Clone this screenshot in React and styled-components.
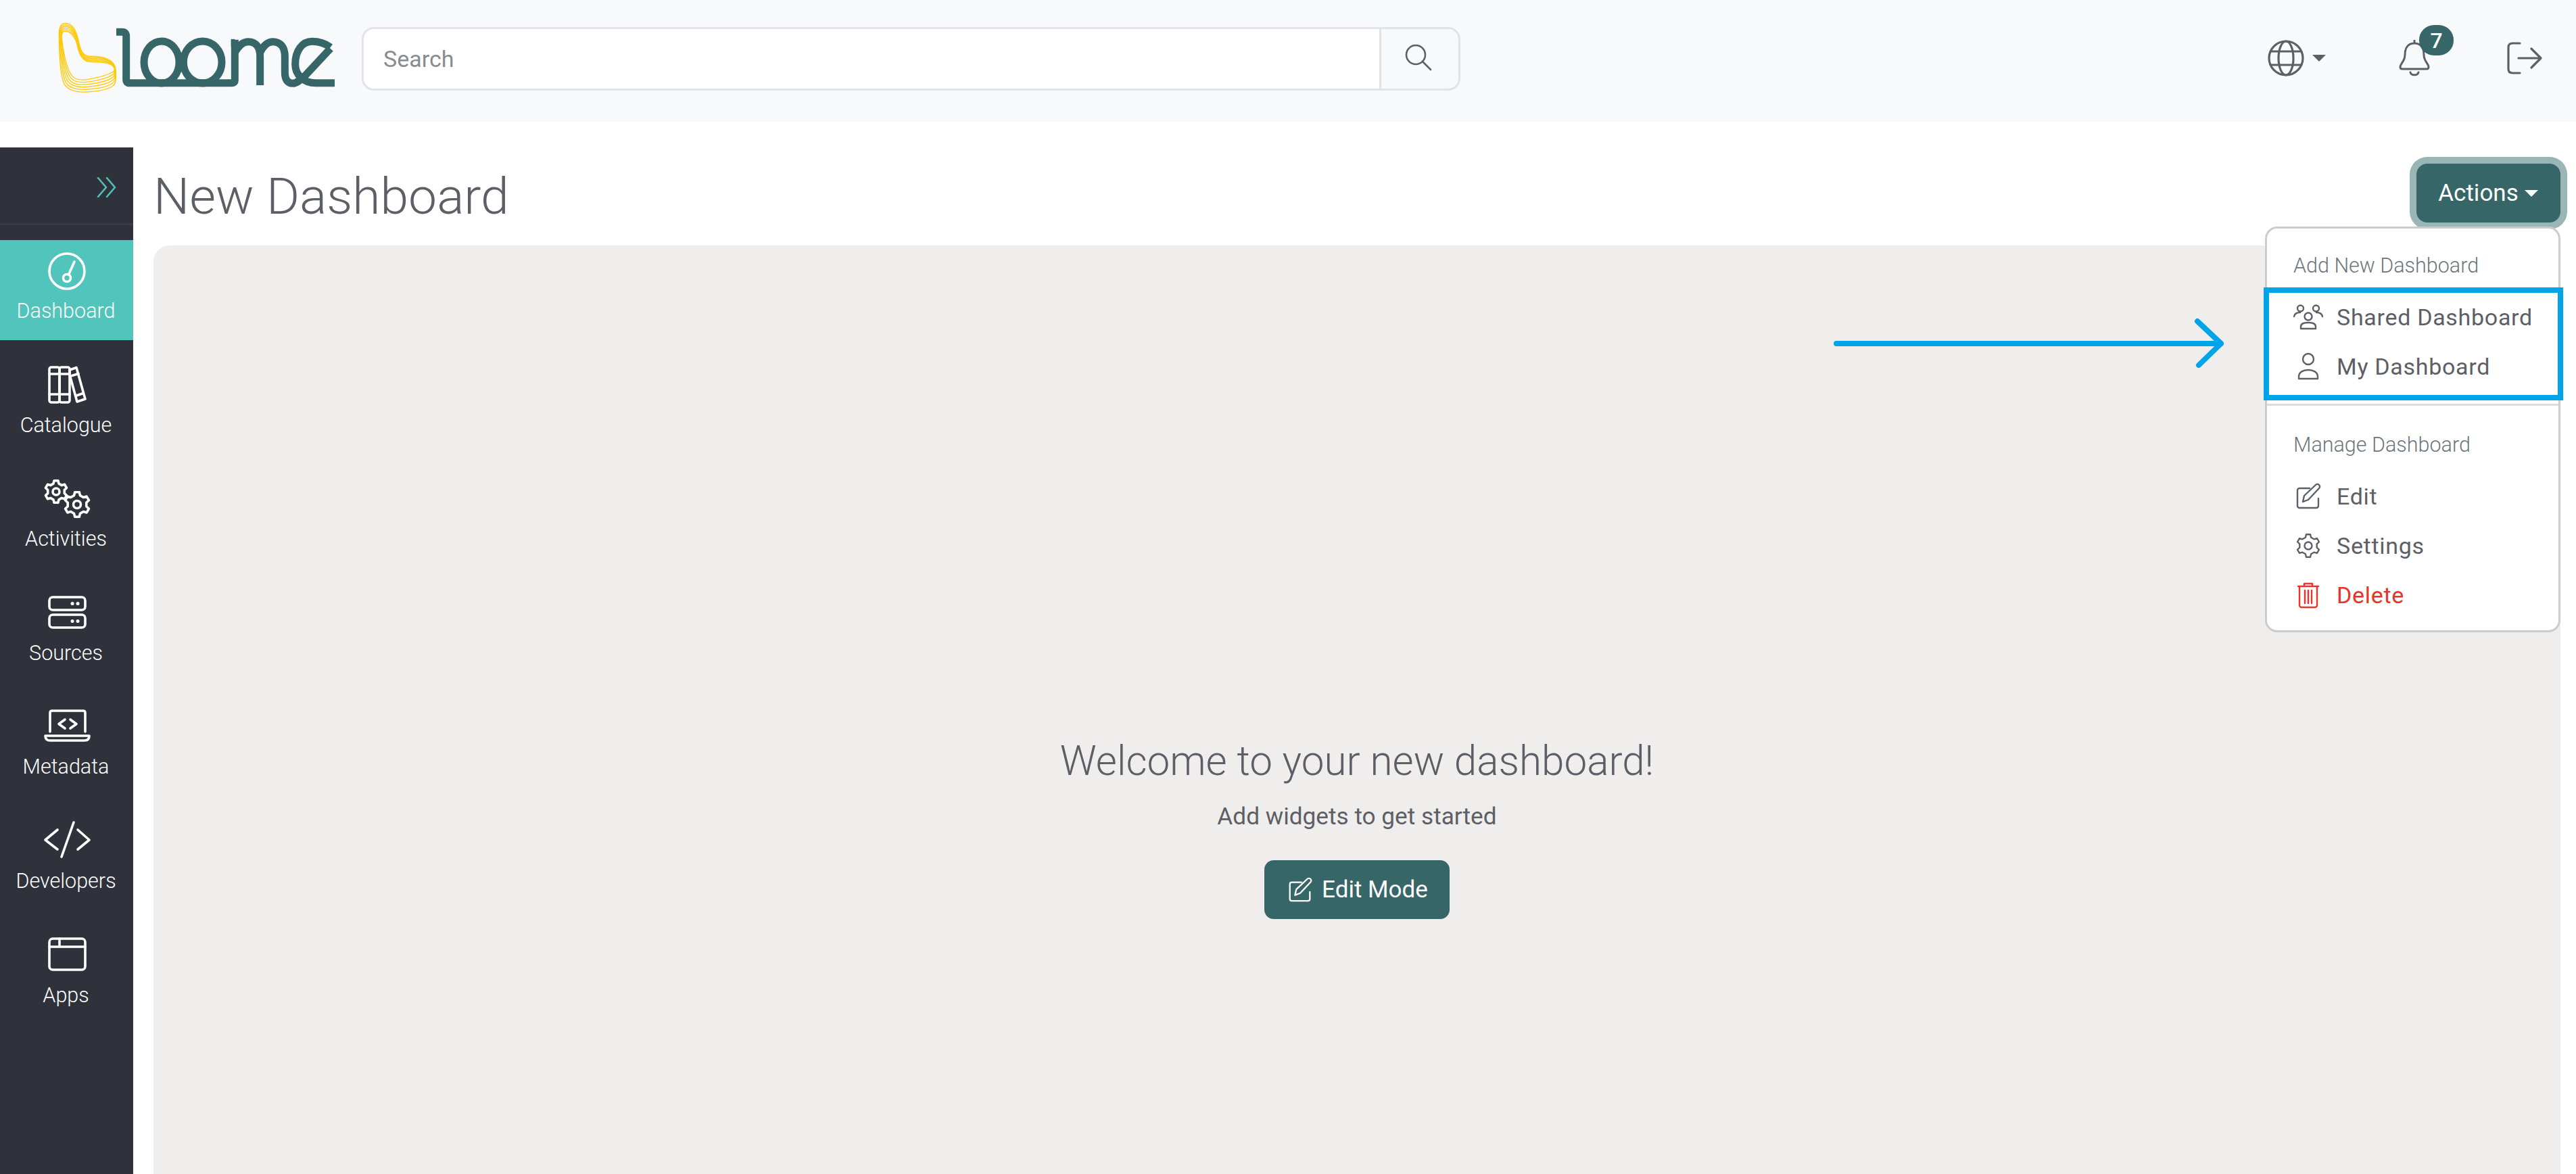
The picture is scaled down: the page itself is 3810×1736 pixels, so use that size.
import React from "react";
import styled, { createGlobalStyle } from "styled-components";

const Global = createGlobalStyle`
  html, body { margin: 0; padding: 0; background: #fff; }
  body { width: 3810px; height: 1736px; overflow: hidden; font-family: Roboto, "Liberation Sans", sans-serif; color: #5e5f66; }
  * { box-sizing: border-box; }
`;

const Page = styled.div`display: flex; flex-direction: column; width: 3810px; height: 1736px; overflow: hidden;`;
const Header = styled.header`flex: 0 0 180px; display: flex; align-items: center; background: #f8f9fb; padding: 0 50px 0 60px;`;
const LogoBox = styled.svg`width: 460px; height: 130px; flex: none; margin-top: -10px;`;
const SearchBar = styled.div`
  width: 1625px; height: 94px; margin: -7px 0 0 15px; display: flex; border: 3px solid #e0e3e9; border-radius: 18px; overflow: hidden;
`;
const SearchInput = styled.div`flex: 1; background: #fff; padding-left: 29px; display: flex; align-items: center; font-size: 34px; color: #888c92; border-right: 3px solid #e0e3e9;`;
const SearchBtn = styled.div`width: 114px; display: flex; align-items: center; justify-content: center;`;
const HeaderRight = styled.div`margin-left: auto; display: flex; align-items: center; margin-top: -8px;`;
const Caret = styled.span`
  width: 0; height: 0; border-left: 10px solid transparent; border-right: 10px solid transparent; border-top: 10px solid ${p => p.$color};
  margin-left: ${p => p.$gap}px;
`;
const BellWrap = styled.div`position: relative; width: 46px; height: 54px; margin: 0 114px 0 108px;`;
const Badge = styled.span`
  position: absolute; left: 30px; top: -22px; width: 51px; height: 45px; border-radius: 22px; background: #366668; color: #fff;
  font-size: 32px; font-weight: 500; display: flex; align-items: center; justify-content: center;
`;

const Body = styled.div`flex: 1; display: flex; padding-top: 38px; min-height: 0;`;
const Sidebar = styled.nav`flex: 0 0 197px; background: #2f323b; display: flex; flex-direction: column;`;
const Toggle = styled.div`flex: 0 0 115px; border-bottom: 3px solid #393c46; margin-bottom: 22px; display: flex; justify-content: flex-end; align-items: flex-start; padding: 44px 24px 0 0;`;
const NavItem = styled.div`
  flex: 0 0 148px; margin-bottom: 20.6px; background: ${p => (p.$active ? "#51c4bb" : "transparent")};
  display: flex; flex-direction: column; align-items: center; padding: 16px 2px 0 0; color: #fff; font-size: 30.5px; font-weight: 300; line-height: 38px;
`;
const NavIcon = styled.svg`width: 60px; height: 60px; overflow: visible; margin-bottom: 10px; fill: none; stroke: #fff; stroke-width: 3.6; stroke-linecap: round; stroke-linejoin: round;`;

const Main = styled.main`flex: 1; margin: 0 23px 0 30px; position: relative; display: flex; flex-direction: column; min-width: 0;`;
const TitleRow = styled.div`flex: 0 0 145px; display: flex; justify-content: space-between; align-items: flex-start;`;
const Title = styled.h1`margin: 22px 0 0 0; font-size: 75px; font-weight: 300; line-height: 100px; color: #5e5f66;`;
const ActionsBtn = styled.div`
  margin-top: 24px; width: 213px; height: 87px; border-radius: 16px; background: #366668; color: #fff; box-shadow: 0 0 0 10px #9ab5b5;
  display: flex; align-items: center; justify-content: center; font-size: 35px; padding-right: 1px;
`;
const Panel = styled.section`flex: 1; background: #efeeec; border-radius: 24px 24px 0 0; padding-top: 727px; display: flex; flex-direction: column; align-items: center;`;
const Welcome = styled.h2`margin: 0; font-size: 60.2px; font-weight: 300; line-height: 72px; color: #5e5f66;`;
const Sub = styled.p`margin: 23px 0 0; font-size: 35.2px; line-height: 44px; color: #5e5f66;`;
const EditBtn = styled.div`
  margin-top: 43px; width: 274px; height: 87px; border-radius: 14px; background: #366668; color: #fff; display: flex; align-items: center; justify-content: center; gap: 11px; font-size: 35px;
`;

const Menu = styled.div`position: absolute; top: 117px; right: 0; width: 437px; height: 600px; background: #fff; border: 3px solid #ccc; border-radius: 18px; padding-top: 24px;`;
const MenuHead = styled.div`height: 60px; margin-bottom: 10px; padding-left: 39px; display: flex; align-items: center; font-size: 30.5px; font-weight: 300; color: #6c757d;`;
const MenuItem = styled.div`height: 73px; padding-left: 39px; display: flex; align-items: center; gap: 20px; font-size: 34px; letter-spacing: 0.7px; color: ${p => p.$color || "#5e5f66"};`;
const MenuIcon = styled.svg`width: ${p => p.$size || 44}px; height: ${p => p.$size || 44}px; flex: none; fill: none; stroke: currentColor; stroke-width: 2.4; stroke-linecap: round; stroke-linejoin: round;`;
const Divider = styled.div`height: 3px; background: #ddd; margin: 19px 0 27px;`;
const Highlight = styled.div`position: absolute; top: 87px; right: -7px; width: 443px; height: 167px; border: 8px solid #00a4e8;`;
const ArrowSvg = styled.svg`position: absolute; left: 2480px; top: 250px; width: 590px; height: 80px; fill: none; stroke: #00a4e8; stroke-width: 8; stroke-linecap: round; stroke-linejoin: round;`;

function gearPath(cx, cy, R, n = 6) {
  const r = R * 0.76;
  const pts = [];
  for (let i = 0; i < n; i++) {
    const a = (i * 2 * Math.PI) / n;
    const s = Math.PI / n;
    [[r, -s * 0.62], [R, -s * 0.34], [R, s * 0.34], [r, s * 0.62]].forEach(([rad, d]) => {
      pts.push([cx + rad * Math.sin(a + d), cy - rad * Math.cos(a + d)]);
    });
  }
  return "M" + pts.map(p => p[0].toFixed(2) + " " + p[1].toFixed(2)).join("L") + "Z";
}

const outer = [[110,43],[85,43,82,70,82,90],[82,170,88,260,100,300],[110,340,160,350,200,348],[260,345,325,335,332,305],[335,280,335,250,330,235],[320,205,280,188,220,190],[190,190,178,165,170,130],[160,80,145,43,110,43]];
const inner = [[110,78],[96,78,92,95,94,110],[100,170,115,240,135,270],[150,295,180,297,210,292],[250,285,300,272,322,258],[328,253,330,247,326,240],[318,222,280,215,225,215],[195,215,175,195,165,150],[158,110,135,78,110,78]];
function lerpLoop(t) {
  const seg = outer.map((o, i) => o.map((v, j) => (v + (inner[i][j] - v) * t).toFixed(1)));
  return "M" + seg[0].join(" ") + seg.slice(1).map(s => "C" + s.join(" ")).join("") + "Z";
}

const Logo = () => (
  <LogoBox viewBox="0 0 1380 390">
    <g fill="none" stroke="#ffc90a" strokeWidth="4">
      {[0, 0.2, 0.4, 0.6, 0.8, 1].map(t => <path key={t} d={lerpLoop(t)} />)}
    </g>
    <g fill="none" stroke="#366668" strokeWidth="33" strokeLinejoin="round">
      <path d="M336 82H362Q380 82 380 100V295Q380 308 393 308H850Q862 308 862 296V116" />
      <path d="M845 130H862" />
      <ellipse cx="537" cy="216" rx="78" ry="93" />
      <ellipse cx="719" cy="216" rx="85" ry="93" />
      <path d="M862 172C880 140 900 125 922 125C955 125 974 150 974 190V318" />
      <path d="M974 172C990 140 1010 125 1030 125C1065 125 1084 150 1084 190V262C1084 295 1098 310 1118 310C1138 310 1155 292 1172 275" />
      <path d="M1286 150C1262 132 1235 124 1205 124C1160 124 1130 165 1130 225C1130 275 1170 308 1220 308H1305" />
      <path d="M1286 155L1170 280" />
    </g>
  </LogoBox>
);

const GlobeIcon = () => (
  <svg width="54" height="54" viewBox="0 0 54 54" fill="none" stroke="#5e5f66" strokeWidth="3.2">
    <circle cx="27" cy="27" r="25" />
    <ellipse cx="27" cy="27" rx="11" ry="25" />
    <path d="M5 17H49M5 37H49" />
  </svg>
);
const BellIcon = () => (
  <svg width="46" height="54" viewBox="0 0 46 54" fill="none" stroke="#5e5f66" strokeWidth="3" strokeLinecap="round" strokeLinejoin="round">
    <path d="M23 1V5M23 5C12 5 9 14 9 22C9 32 2 35 2 40C2 42 3 43 5 43H41C43 43 44 42 44 40C44 35 37 32 37 22C37 14 34 5 23 5Z" />
    <path d="M17 48C18 53 28 53 29 48" />
  </svg>
);
const LogoutIcon = () => (
  <svg width="52" height="48" viewBox="0 0 52 48" fill="none" stroke="#5e5f66" strokeWidth="3.2" strokeLinecap="round" strokeLinejoin="round">
    <path d="M19 2H8C4 2 2 4 2 8V40C2 44 4 46 8 46H19" />
    <path d="M17 24H50M36 10L50 24L36 38" />
  </svg>
);
const SearchIcon = () => (
  <svg width="44" height="44" viewBox="0 0 44 44" fill="none" stroke="#5e5f66" strokeWidth="2.6" strokeLinecap="round">
    <circle cx="16" cy="16" r="14" />
    <path d="M26 26L38 38" />
  </svg>
);

const navItems = [
  { label: "Dashboard", active: true, icon: <><circle cx="31" cy="30" r="26" /><circle cx="31" cy="40" r="5.5" /><path d="M34 34L42 16" /></> },
  { label: "Catalogue", icon: <><rect x="5" y="3" width="15" height="52" rx="3" /><rect x="20" y="3" width="15" height="52" rx="3" /><path d="M5 13H35M5 43H35" /><path d="M35 7L45 3.5L58 50L46 54L35 14Z" /><path d="M37 16L48 12.5M45 45L55 41.5" /></> },
  { label: "Activities", icon: <><path d={gearPath(15, 19, 16.5)} /><circle cx="15" cy="19" r="5" /><path d={gearPath(46, 38, 18.5)} /><circle cx="46" cy="38" r="5.5" /></> },
  { label: "Sources", icon: <><rect x="5" y="6" width="53" height="19" rx="5" /><rect x="5" y="32" width="53" height="19" rx="5" /><path d="M39 15.5H39.1M47 15.5H47.1M39 41.5H39.1M47 41.5H47.1" strokeWidth="5" /></> },
  { label: "Metadata", icon: <><path d="M6 37V9Q6 6 9 6H55Q58 6 58 9V37" /><path d="M-1 43H64Q64 50 57 50H6Q-1 50 -1 43Z" /><path d="M28 19L19 25.5L28 32M36 19L45 25.5L36 32" /></> },
  { label: "Developers", icon: <><path d="M17 13L-1 28L17 42M47 13L64 28L47 42M41 2L23 53" /></> },
  { label: "Apps", icon: <><rect x="5" y="5" width="53" height="46" rx="5" /><path d="M5 17H58M20 5V17" /></> },
];

const EditGlyph = () => <><path d="M37 25V36A3 3 0 0 1 34 39H9A3 3 0 0 1 6 36V13A3 3 0 0 1 9 10H24" /><path d="M14 30L16 21L33 5A3.5 3.5 0 0 1 38 10L22 27Z" /></>;

export default function App() {
  return (
    <Page>
      <Global />
      <Header>
        <Logo />
        <SearchBar>
          <SearchInput>Search</SearchInput>
          <SearchBtn><SearchIcon /></SearchBtn>
        </SearchBar>
        <HeaderRight>
          <GlobeIcon />
          <Caret $color="#5e5f66" $gap={12} />
          <BellWrap>
            <BellIcon />
            <Badge>7</Badge>
          </BellWrap>
          <LogoutIcon />
        </HeaderRight>
      </Header>
      <Body>
        <Sidebar>
          <Toggle>
            <svg width="30" height="30" viewBox="0 0 30 30" fill="none" stroke="#4fc3bb" strokeWidth="2.6" strokeLinecap="round" strokeLinejoin="round">
              <path d="M2 1L14 15L2 29M15 1L27 15L15 29" />
            </svg>
          </Toggle>
          {navItems.map(n => (
            <NavItem key={n.label} $active={n.active}>
              <NavIcon viewBox="0 0 60 60">{n.icon}</NavIcon>
              {n.label}
            </NavItem>
          ))}
        </Sidebar>
        <Main>
          <TitleRow>
            <Title>New Dashboard</Title>
            <ActionsBtn>Actions<Caret $color="#fff" $gap={9} /></ActionsBtn>
          </TitleRow>
          <Panel>
            <Welcome>Welcome to your new dashboard!</Welcome>
            <Sub>Add widgets to get started</Sub>
            <EditBtn>
              <MenuIcon viewBox="0 0 44 44" $size={42}><EditGlyph /></MenuIcon>
              Edit Mode
            </EditBtn>
          </Panel>
          <ArrowSvg viewBox="0 0 590 80">
            <path d="M9 40H578M543 7L578 40L545 72" />
          </ArrowSvg>
          <Menu>
            <MenuHead>Add New Dashboard</MenuHead>
            <MenuItem>
              <MenuIcon viewBox="0 0 44 44">
                <circle cx="22" cy="21" r="5.5" /><circle cx="10.5" cy="9" r="4.5" /><circle cx="33.5" cy="9" r="4.5" />
                <path d="M11 39V36C11 31 16 30 22 30C28 30 33 31 33 36V39Z" /><path d="M1 21C2 16 6 15 10 15M43 21C42 16 38 15 34 15" />
              </MenuIcon>
              Shared Dashboard
            </MenuItem>
            <MenuItem>
              <MenuIcon viewBox="0 0 44 44"><circle cx="22" cy="11" r="8" /><path d="M8 40V37C8 30 15 27 22 27C29 27 36 30 36 37V40Z" /></MenuIcon>
              My Dashboard
            </MenuItem>
            <Divider />
            <MenuHead>Manage Dashboard</MenuHead>
            <MenuItem><MenuIcon viewBox="0 0 44 44"><EditGlyph /></MenuIcon>Edit</MenuItem>
            <MenuItem><MenuIcon viewBox="0 0 44 44"><path d={gearPath(22, 22, 17)} /><circle cx="22" cy="22" r="5.5" /></MenuIcon>Settings</MenuItem>
            <MenuItem $color="#e8342a"><MenuIcon viewBox="0 0 44 44"><path d="M7 9H37M9 9V37A3 3 0 0 0 12 40H32A3 3 0 0 0 35 37V9M16 9V5H28V9M17 15V34M22 15V34M27 15V34" /></MenuIcon>Delete</MenuItem>
            <Highlight />
          </Menu>
        </Main>
      </Body>
    </Page>
  );
}
